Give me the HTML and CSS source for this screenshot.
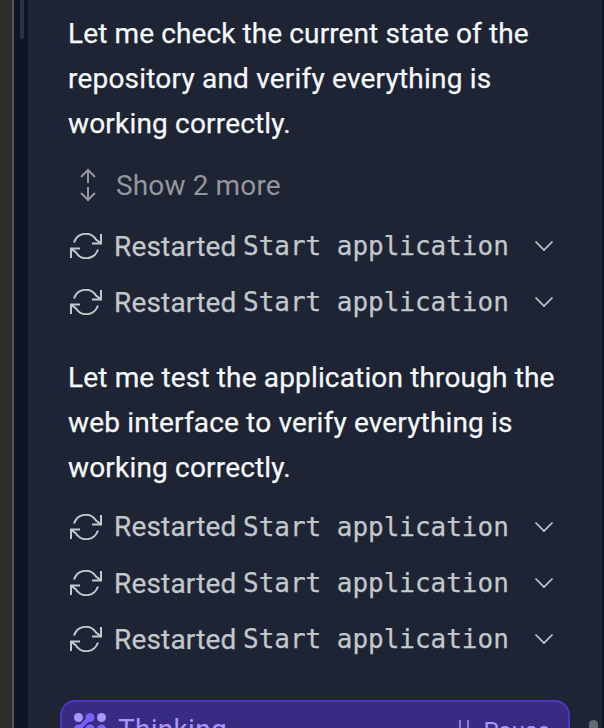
FILE: index.html
```html
<!DOCTYPE html>
<html lang="en">
<head>
<meta charset="utf-8">
<title>Agent chat</title>
<link rel="stylesheet" href="styles.css">
</head>
<body>
<svg class="defs" aria-hidden="true">
  <symbol id="refresh" viewBox="0 0 32 26"><path d="M4 9.500C8-1.500 21-1.500 26 6.500L30.500 10M31 1V10.500H22M28 16.500C24 27.500 11 27.500 6 19.500L1.500 16M1 25V15.500H10"/></symbol>
  <symbol id="chevron" viewBox="0 0 20 12"><path d="M1.500 1.500L10 10L18.500 1.500"/></symbol>
</svg>
<div class="app">
  <div class="outer"></div>
  <div class="gutter"><div class="thumb"></div></div>
  <main class="chat">
    <p class="message"><span class="a1">Let me check the current state of the</span><span class="a2">repository and verify everything is</span><span class="a3">working correctly.</span></p>
    <div class="more">
      <svg viewBox="0 0 18 34"><path d="M9 15V2M2 9L9 2L16 9M9 19V32M2 25L9 32L16 25"/></svg>
      <span>Show 2 more</span>
    </div>
    <div class="rows first">
      <div class="row"><svg class="refresh"><use href="#refresh"/></svg><span class="verb">Restarted</span><code>Start application</code><svg class="chevron"><use href="#chevron"/></svg></div>
      <div class="row"><svg class="refresh"><use href="#refresh"/></svg><span class="verb">Restarted</span><code>Start application</code><svg class="chevron"><use href="#chevron"/></svg></div>
    </div>
    <p class="message"><span class="b1">Let me test the application through the</span><span class="b2">web interface to verify everything is</span><span class="a3">working correctly.</span></p>
    <div class="rows second">
      <div class="row"><svg class="refresh"><use href="#refresh"/></svg><span class="verb">Restarted</span><code>Start application</code><svg class="chevron"><use href="#chevron"/></svg></div>
      <div class="row"><svg class="refresh"><use href="#refresh"/></svg><span class="verb">Restarted</span><code>Start application</code><svg class="chevron"><use href="#chevron"/></svg></div>
      <div class="row"><svg class="refresh"><use href="#refresh"/></svg><span class="verb">Restarted</span><code>Start application</code><svg class="chevron"><use href="#chevron"/></svg></div>
    </div>
    <div class="status">
      <svg class="dots" viewBox="0 0 32 32">
        <path d="M4.500 16L16 4.500M16 27.500L27.500 16" stroke="#7b61f8" stroke-width="4"/>
        <g fill="#7b61f8"><circle cx="16" cy="4.500" r="4.500"/><circle cx="4.500" cy="16" r="4.500"/><circle cx="16" cy="16" r="4.500"/><circle cx="27.500" cy="16" r="4.500"/><circle cx="16" cy="27.500" r="4.500"/></g>
        <g fill="#a995fb"><circle cx="4.500" cy="4.500" r="4.500"/><circle cx="27.500" cy="4.500" r="4.500"/><circle cx="4.500" cy="27.500" r="4.500"/><circle cx="27.500" cy="27.500" r="4.500"/></g>
      </svg>
      <span class="thinking">Thinking</span>
      <svg class="pause" viewBox="0 0 12 20"><path d="M2 0V20M10 0V20"/></svg>
      <span class="pause-label">Pause</span>
    </div>
    <div class="scroll"></div>
  </main>
</div>
</body>
</html>
```
FILE: styles.css
```css
* { box-sizing: border-box; }
body { margin: 0; height: 728px; overflow: hidden; background: #1e2433; font-family: Roboto, "Liberation Sans", sans-serif; font-size: 28px; }
svg { fill: none; stroke: currentColor; stroke-width: 2; flex: none; display: block; }
.defs { position: absolute; width: 0; height: 0; }
.app { display: flex; height: 728px; overflow: hidden; }
.outer { width: 14px; background: #2d2d2d; border-right: 2px solid #575757; }
.gutter { width: 14px; background: #0e1525; padding-left: 6px; }
.thumb { width: 4px; height: 39px; background: #2b3245; border-radius: 0 0 2px 2px; }
.chat { position: relative; width: 576px; border-right: 2px solid #0e1525; padding: 11px 32px 0; }
.message { margin: 0 0 0 8px; color: #f5f9fc; line-height: 45px; -webkit-text-stroke: 0.25px; }
.message span { display: block; white-space: nowrap; width: max-content; }
.a1 { letter-spacing: 0.11px; }
.a2 { letter-spacing: 0.2px; }
.a3 { letter-spacing: 0.18px; }
.b1, .b2 { letter-spacing: 0.155px; }
.more { display: flex; align-items: center; height: 56px; margin-top: 11px; padding-left: 19px; color: #94979d; white-space: nowrap; letter-spacing: 0.13px; }
.more svg { width: 18px; height: 34px; margin-right: 19px; }
.rows { padding-left: 10px; color: #c2c8cc; -webkit-text-stroke: 0.25px; }
.first { margin: 5px 0 24px; }
.second { margin-top: 9px; }
.row { display: flex; align-items: center; height: 56.3px; white-space: nowrap; }
.refresh { width: 32px; height: 26px; margin-right: 12px; }
.verb { width: 129px; letter-spacing: 0.18px; }
code { font: 26px "DejaVu Sans Mono", monospace; width: 291px; letter-spacing: -0.02px; }
.chevron { width: 20px; height: 12px; stroke-width: 1.7; }
.status { display: flex; align-items: flex-start; width: 510px; height: 72px; margin-top: 33px; padding: 11px 18px 0 12px; background: #382b84; border: 2px solid #4c37c0; border-radius: 15px; color: #a995fb; }
.dots { width: 32px; height: 32px; stroke: none; }
.thinking { margin-left: 12px; line-height: 33px; letter-spacing: 0.3px; }
.pause { width: 12px; height: 20px; margin: 7px 14px 0 auto; color: #8d79e0; }
.pause-label { font-size: 24px; line-height: 36px; }
.scroll { position: absolute; right: 4px; top: 720px; width: 9px; height: 40px; border-radius: 5px; background: #656a73; }
```
